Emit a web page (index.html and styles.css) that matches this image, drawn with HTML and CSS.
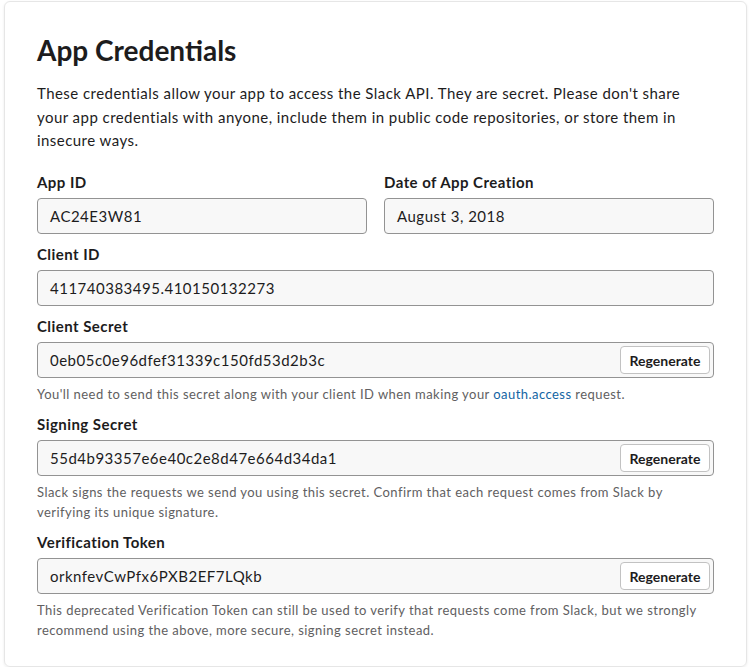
FILE: index.html
```html
<!DOCTYPE html>
<html>
<head>
<meta charset="utf-8">
<link rel="stylesheet" href="styles.css">
</head>
<body>
<div class="card">
  <h1 class="title">App Credentials</h1>
  <p class="intro">These credentials allow your app to access the Slack API. They are secret. Please don't share your app credentials with anyone, include them in public code repositories, or store them in insecure ways.</p>

  <div class="row">
    <div class="field">
      <div class="label">App ID</div>
      <div class="input">AC24E3W81</div>
    </div>
    <div class="field">
      <div class="label">Date of App Creation</div>
      <div class="input">August 3, 2018</div>
    </div>
  </div>

  <div class="field">
    <div class="label">Client ID</div>
    <div class="input">411740383495.410150132273</div>
  </div>

  <div class="field">
    <div class="label">Client Secret</div>
    <div class="input with-btn"><span>0eb05c0e96dfef31339c150fd53d2b3c</span><button class="btn">Regenerate</button></div>
    <div class="help">You'll need to send this secret along with your client ID when making your <a class="link">oauth.access</a> request.</div>
  </div>

  <div class="field">
    <div class="label">Signing Secret</div>
    <div class="input with-btn"><span>55d4b93357e6e40c2e8d47e664d34da1</span><button class="btn">Regenerate</button></div>
    <div class="help">Slack signs the requests we send you using this secret. Confirm that each request comes from Slack by verifying its unique signature.</div>
  </div>

  <div class="field">
    <div class="label">Verification Token</div>
    <div class="input with-btn"><span>orknfevCwPfx6PXB2EF7LQkb</span><button class="btn">Regenerate</button></div>
    <div class="help">This deprecated Verification Token can still be used to verify that requests come from Slack, but we strongly recommend using the above, more secure, signing secret instead.</div>
  </div>
</div>
</body>
</html>
```

FILE: styles.css
```css
* { box-sizing: border-box; }
html, body { margin: 0; padding: 0; background: #ffffff; }
body {
  font-family: Lato, "Noto Sans", sans-serif;
  color: #1d1c1d;
}
.card {
  margin: 1px 0 0 4px;
  width: 743px;
  border: 1px solid #e6e6e6;
  border-radius: 6px;
  box-shadow: 0 1px 3px rgba(0,0,0,0.08);
  padding: 31px 32px 25px 32px;
}
.title {
  margin: 0;
  font-size: 28px;
  line-height: 34px;
  font-weight: 700;
}
.intro {
  margin: 15px 0 0 0;
  font-size: 15px;
  line-height: 23.5px;
  letter-spacing: 0.45px;
}
.row {
  display: grid;
  grid-template-columns: 330px 330px;
  column-gap: 17px;
  margin-top: 19.5px;
}
.row .field { margin-top: 0; }
.field { margin-top: 10px; }
.label {
  font-size: 15px;
  line-height: 20px;
  font-weight: 700;
  letter-spacing: 0.45px;
}
.input {
  margin-top: 6px;
  height: 36px;
  border: 1px solid #939393;
  border-radius: 4px;
  background: #f8f8f8;
  padding: 0 3px 0 12px;
  font-size: 15px;
  letter-spacing: 0.5px;
  display: flex;
  align-items: center;
  justify-content: space-between;
}
.btn {
  font-family: Lato, "Noto Sans", sans-serif;
  width: 90px;
  height: 28px;
  background: #ffffff;
  border: 1px solid #c2c2c2;
  border-radius: 4px;
  font-size: 14px;
  font-weight: 700;
  letter-spacing: 0;
  color: #1d1c1d;
  padding: 0;
}
.help {
  margin-top: 6px;
  margin-bottom: 1px;
  font-size: 13px;
  line-height: 20px;
  letter-spacing: 0.45px;
  color: #616061;
}
.link { color: #1264a3; text-decoration: none; }
```
